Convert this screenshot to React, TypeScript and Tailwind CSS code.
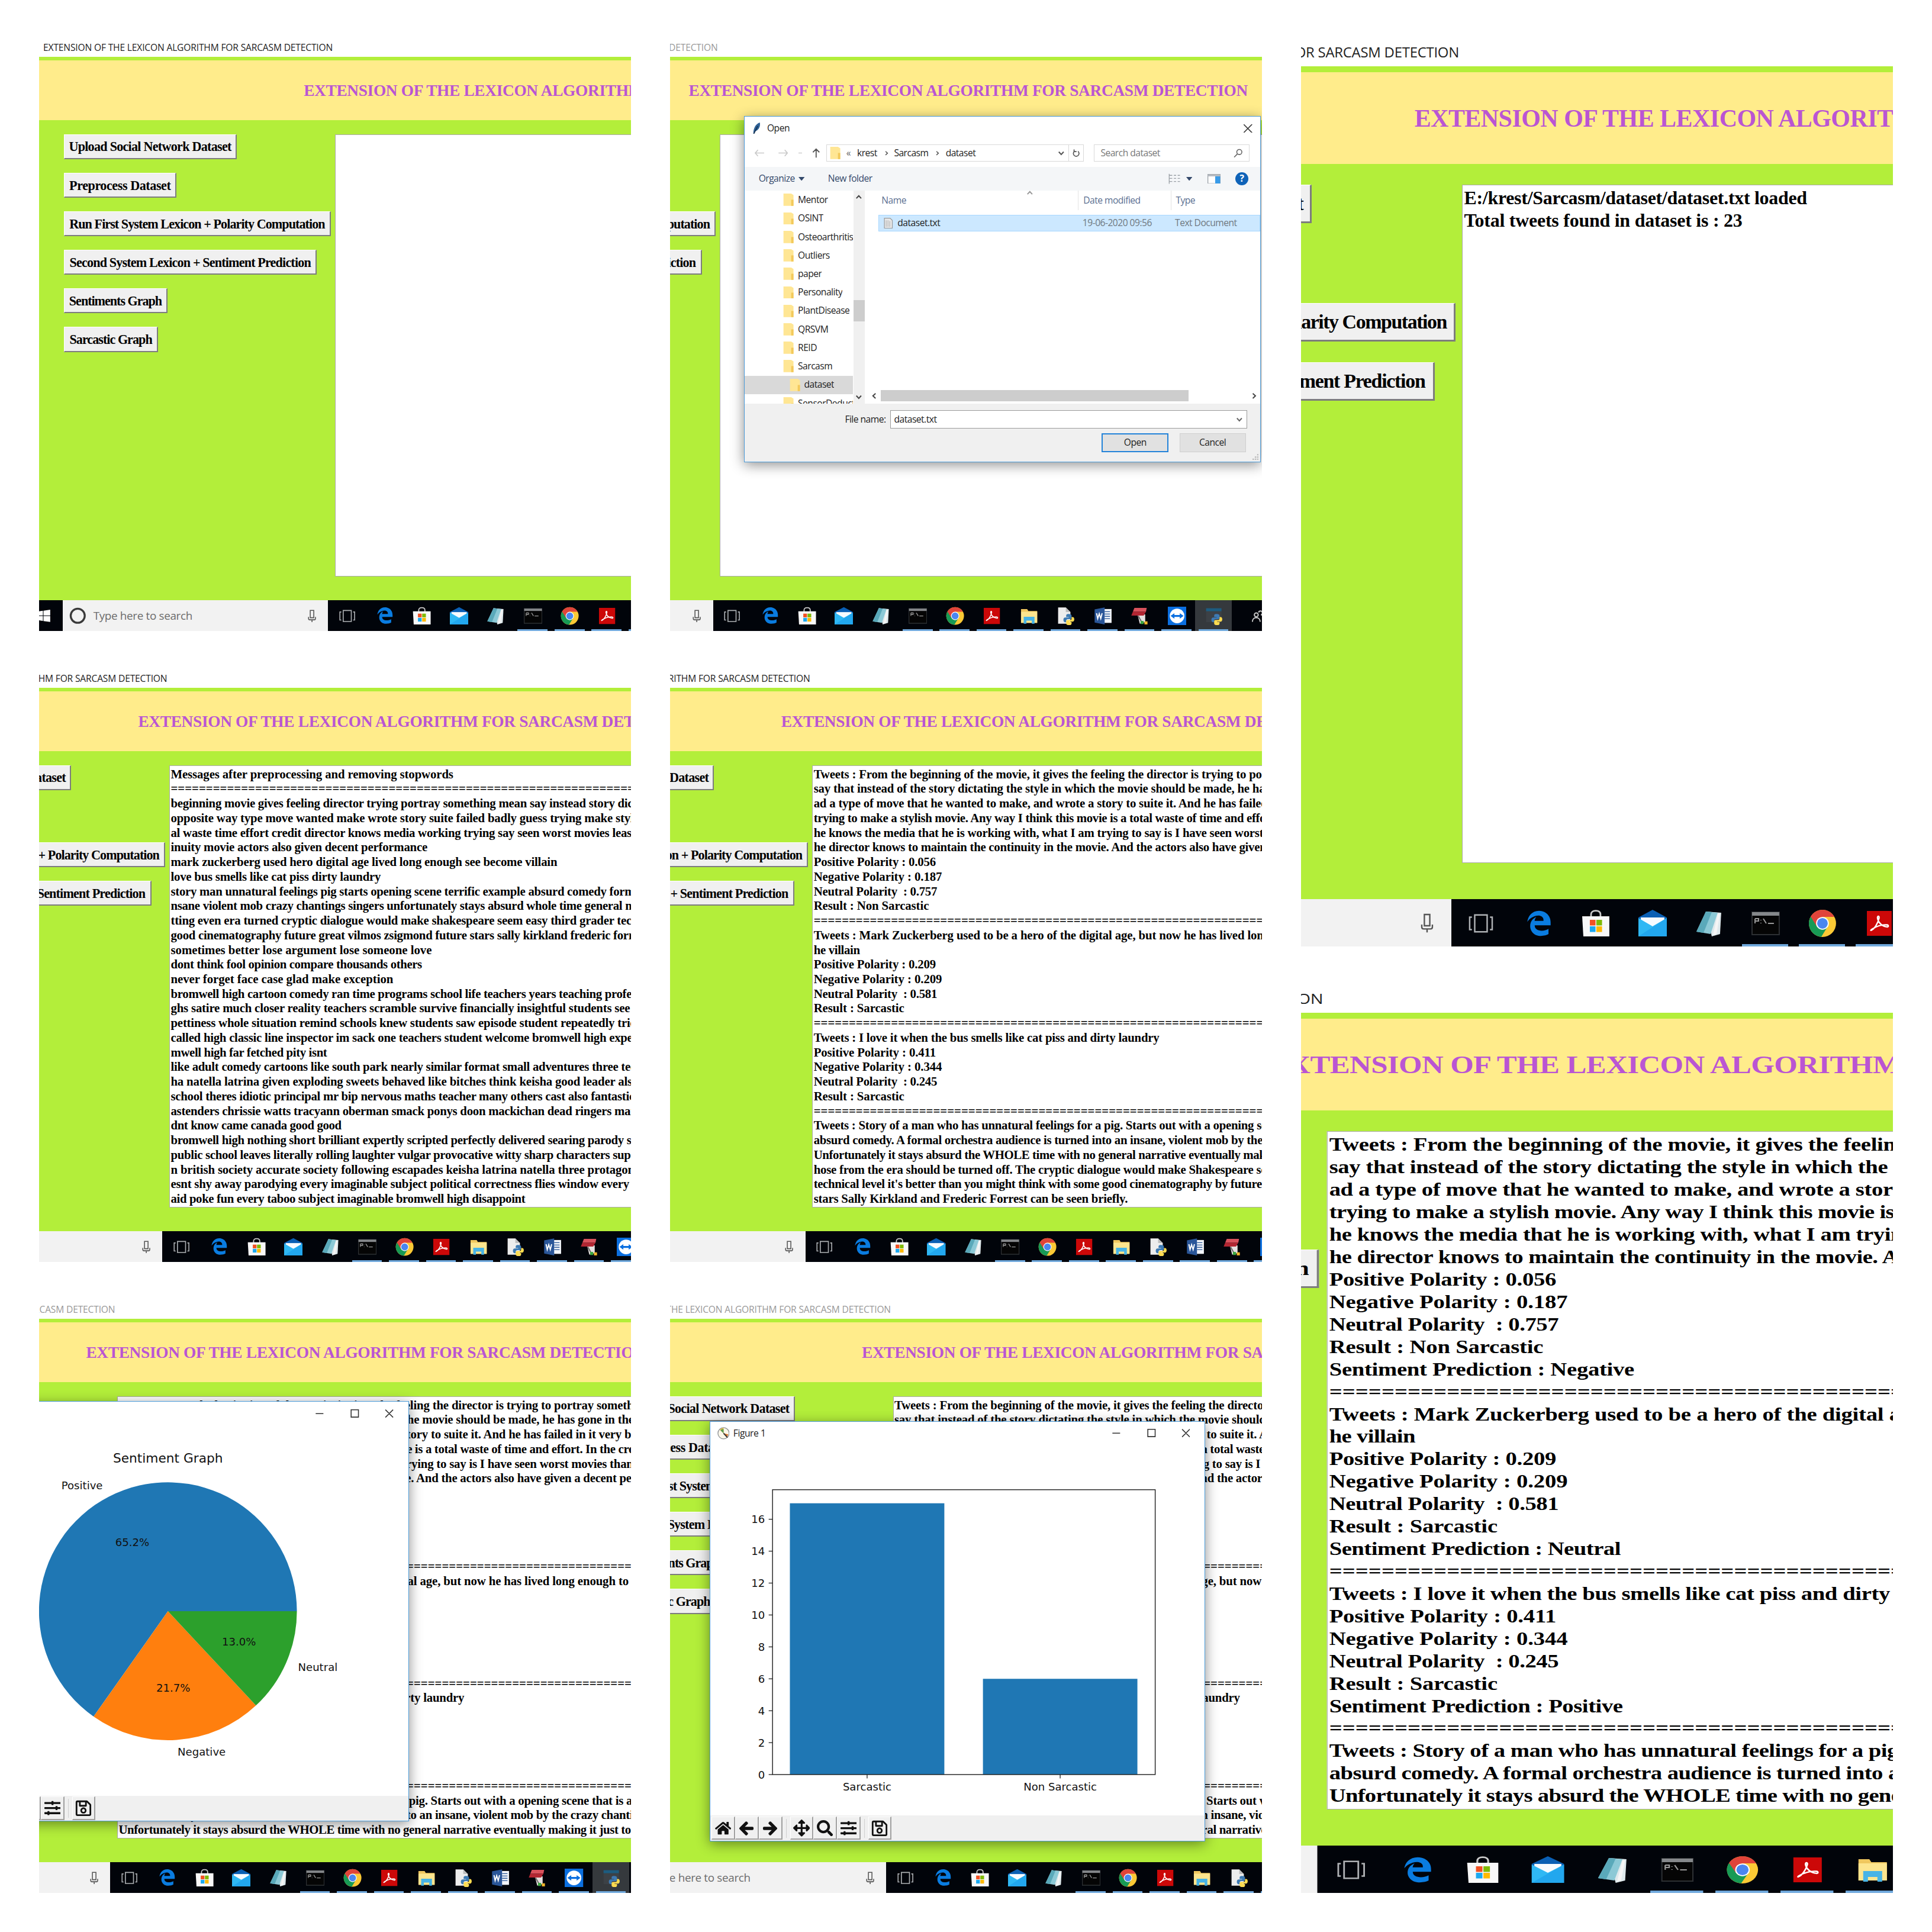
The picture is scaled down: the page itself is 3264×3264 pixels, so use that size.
import type { ReactNode } from "react";
import {
  FaArrowLeft,
  FaArrowRight,
  FaArrowsAlt,
  FaHome,
  FaRegSave,
  FaSearch,
  FaSlidersH,
} from "react-icons/fa";
import { FaEdgeLegacy } from "react-icons/fa6";

const TITLE = "EXTENSION OF THE LEXICON ALGORITHM FOR SARCASM DETECTION";

const ACTIONS: { label: string; width: string; text: number }[] = [
  { label: "Upload Social Network Dataset", width: "w-[224px]", text: 210.7 },
  { label: "Preprocess Dataset", width: "w-[146px]", text: 131.6 },
  { label: "Run First System Lexicon + Polarity Computation", width: "w-[346px]", text: 331.5 },
  { label: "Second System Lexicon + Sentiment Prediction", width: "w-[328px]", text: 313 },
  { label: "Sentiments Graph", width: "w-[134px]", text: 120 },
  { label: "Sarcastic Graph", width: "w-[122px]", text: 107 },
];

/* A line of output: its head, the width the head takes, and what follows it. */
type Line = [string, number, string?];

const RULE: Line = ["=".repeat(110), 1003];

const LOADED: Line[] = [
  ["E:/krest/Sarcasm/dataset/dataset.txt loaded", 290.4],
  ["Total tweets found in dataset is : 23", 235.6],
];

const PREPROCESSED: Line[] = [
  ["Messages after preprocessing and removing stopwords", 367],
  RULE,
  ["beginning movie gives feeling director trying portray something mean say instead story", 576.5, " dictating"],
  ["opposite way type move wanted make wrote story suite failed badly guess trying make", 573.5, " stylish"],
  ["al waste time effort credit director knows media working trying say seen worst movies", 569.5, " least"],
  ["inuity movie actors also given decent performance", 333],
  ["mark zuckerberg used hero digital age lived long enough see become villain", 501.5],
  ["love bus smells like cat piss dirty laundry", 272.5],
  ["story man unnatural feelings pig starts opening scene terrific example absurd comedy", 565.5, " formal"],
  ["nsane violent mob crazy chantings singers unfortunately stays absurd whole time general", 586, " narrative"],
  ["tting even era turned cryptic dialogue would make shakespeare seem easy third grader", 575.5, " technical"],
  ["good cinematography future great vilmos zsigmond future stars sally kirkland frederic", 570.5, " forrest"],
  ["sometimes better lose argument lose someone love", 339],
  ["dont think fool opinion compare thousands others", 326],
  ["never forget face case glad make exception", 289],
  ["bromwell high cartoon comedy ran time programs school life teachers years teaching", 559.5, " profession"],
  ["ghs satire much closer reality teachers scramble survive financially insightful students", 572.5, " see"],
  ["pettiness whole situation remind schools knew students saw episode student repeatedly", 576, " tried"],
  ["called high classic line inspector im sack one teachers student welcome bromwell high", 565.5, " expect"],
  ["mwell high far fetched pity isnt", 203],
  ["like adult comedy cartoons like south park nearly similar format small adventures three", 581, " teenage"],
  ["ha natella latrina given exploding sweets behaved like bitches think keisha good leader", 577, " also"],
  ["school theres idiotic principal mr bip nervous maths teacher many others cast also", 542, " fantastic"],
  ["astenders chrissie watts tracyann oberman smack ponys doon mackichan dead ringers", 572, " mark"],
  ["dnt know came canada good good", 221.5],
  ["bromwell high nothing short brilliant expertly scripted perfectly delivered searing parody", 588, " students"],
  ["public school leaves literally rolling laughter vulgar provocative witty sharp characters", 570.5, " superb"],
  ["n british society accurate society following escapades keisha latrina natella three", 537, " protagonists"],
  ["esnt shy away parodying every imaginable subject political correctness flies window every", 595],
  ["aid poke fun every taboo subject imaginable bromwell high disappoint", 460],
];

const MOVIE: Line[] = [
  ["Tweets : From the beginning of the movie, it gives the feeling the director is trying to", 561.5, " portray something mean"],
  ["say that instead of the story dictating the style in which the movie should be made,", 546, " he has gone in the opposite"],
  ["ad a type of move that he wanted to make, and wrote a story to suite it. And he has", 549, " failed in it very badly"],
  ["trying to make a stylish movie. Any way I think this movie is a total waste of time and", 559, " effort. In the credit"],
  ["he knows the media that he is working with, what I am trying to say is I have seen", 542.5, " worst movies than this"],
  ["he director knows to maintain the continuity in the movie. And the actors also have", 549.5, " given a decent performance"],
];
const MARK: Line[] = [
  ["Tweets : Mark Zuckerberg used to be a hero of the digital age, but now he has lived", 559, " long enough to see"],
  ["he villain", 60],
];
const BUS: Line = ["Tweets : I love it when the bus smells like cat piss and dirty laundry", 448.5];
const STORY: Line[] = [
  ["Tweets : Story of a man who has unnatural feelings for a pig. Starts out with a opening", 571.5, " scene that is a terrific"],
  ["absurd comedy. A formal orchestra audience is turned into an insane, violent mob by", 560, " the crazy chantings of"],
  ["Unfortunately it stays absurd the WHOLE time with no general narrative eventually", 554, " making it just too off"],
  ["hose from the era should be turned off. The cryptic dialogue would make Shakespeare", 571, " seem easy"],
  ["technical level it's better than you might think with some good cinematography by", 537.5, " future great Vilmos"],
  ["stars Sally Kirkland and Frederic Forrest can be seen briefly.", 407.5],
];

function scores(pos: string, neg: string, neu: string, result: Line): Line[] {
  return [
    [`Positive Polarity : ${pos}`, 158.5],
    [`Negative Polarity : ${neg}`, 166.5],
    [`Neutral Polarity  : ${neu}`, 160.2],
    result,
  ];
}

const SARCASTIC: Line = ["Result : Sarcastic", 117.5];
const NON_SARCASTIC: Line = ["Result : Non Sarcastic", 149.5];

const POLARITY: Line[] = [
  ...MOVIE,
  ...scores("0.056", "0.187", "0.757", NON_SARCASTIC),
  RULE,
  ...MARK,
  ...scores("0.209", "0.209", "0.581", SARCASTIC),
  RULE,
  BUS,
  ...scores("0.411", "0.344", "0.245", SARCASTIC),
  RULE,
  ...STORY,
];

const PREDICTION: Line[] = [
  ...MOVIE,
  ...scores("0.056", "0.187", "0.757", NON_SARCASTIC),
  ["Sentiment Prediction : Negative", 213],
  RULE,
  ...MARK,
  ...scores("0.209", "0.209", "0.581", SARCASTIC),
  ["Sentiment Prediction : Neutral", 203.5],
  RULE,
  BUS,
  ...scores("0.411", "0.344", "0.245", SARCASTIC),
  ["Sentiment Prediction : Positive", 205],
  RULE,
  ...STORY.slice(0, 3),
];

const ruler = document.createElement("canvas").getContext("2d");

/* Letter spacing that brings a text set in the given font to the given width. */
function spacing(text: string, font: string, width: number) {
  if (!ruler) return 0;
  ruler.font = font;
  return (width - ruler.measureText(text).width) / text.length;
}

function Fit({ text, font, width, tail = "" }: { text: string; font: string; width: number; tail?: string }) {
  return (
    <span className="whitespace-pre" style={{ letterSpacing: `${spacing(text, font, width)}px` }}>
      {text + tail}
    </span>
  );
}

/* ---------- taskbar ---------- */

function PythonMark() {
  return (
    <>
      <path
        d="M15.5 9.5c-2.400 0-3 1-3 2.200v1.800h3.200v.6h-4.500c-1.500 0-2.300 1.200-2.300 3s.8 3 2 3h1.600v-1.900c0-1.200 1-2 2.100-2h3.200c1 0 1.700-.8 1.700-1.700v-2.800c0-1.400-1.300-2.200-4-2.200z"
        fill="#3d7ab3"
      />
      <path
        d="M16.500 24c2.400 0 3-1 3-2.200V20h-3.200v-.6h4.500c1.500 0 2.200-1.200 2.200-3s-.8-3-2-3h-1.500v1.900c0 1.200-1 2-2.100 2h-3.200c-1 0-1.700.8-1.700 1.700v2.800c0 1.400 1.300 2.200 4 2.200z"
        fill="#ffdc50"
      />
    </>
  );
}

function Glyph({ children }: { children: ReactNode }) {
  return (
    <svg viewBox="0 0 24 24" className="h-6 w-6">
      {children}
    </svg>
  );
}

const APPS: { name: string; running: boolean; icon: ReactNode }[] = [
  { name: "edge", running: false, icon: <FaEdgeLegacy className="h-[23px] w-[22px] text-[#0a7ce0]" /> },
  {
    name: "store",
    running: false,
    icon: (
      <Glyph>
        <path d="M8 7V4.500C8 2.500 9.500 1.300 12 1.300s4 1.200 4 3.200V7" fill="none" stroke="#c9c9c9" strokeWidth="1.400" />
        <path d="M.5 6h23v17h-22z" fill="#f8f8f8" />
        <path d="M7 9h4.800v4.800H7z" fill="#f25022" />
        <path d="M12.500 9h4.800v4.800h-4.800z" fill="#7fba00" />
        <path d="M7 14.500h4.800v4.800H7z" fill="#1ba8f0" />
        <path d="M12.500 14.500h4.800v4.800h-4.800z" fill="#ffb900" />
      </Glyph>
    ),
  },
  {
    name: "mail",
    running: false,
    icon: (
      <Glyph>
        <path d="M0 7 12 .5 24 7v16H0z" fill="#0a5fb4" />
        <path d="M2 7h20v9H2z" fill="#f7fbff" />
        <path d="M0 7.500l12 7L24 7.500V23H0z" fill="#2fb8f4" />
        <path d="M0 23 24 7.500V23z" fill="#22a7ee" />
      </Glyph>
    ),
  },
  {
    name: "notepad",
    running: false,
    icon: (
      <Glyph>
        <path d="M9 2l13 1-1 18-7 2z" fill="#dfe9ec" />
        <path d="M9 2l10 1-6 18-12-2z" fill="#8cc9d6" />
        <path d="M9 2l5 .5L7 20l-6-1z" fill="#5aa9ba" />
        <path d="M19 4h2l-3 17-3 1z" fill="#f5f5f5" />
      </Glyph>
    ),
  },
  {
    name: "terminal",
    running: true,
    icon: (
      <Glyph>
        <path d="M.5 2.500h23v19H.5z" fill="#050505" stroke="#2d3033" />
        <path d="M.5 2.500h23v3H.5z" fill="#85888b" />
        <path d="M3 8v4M3 8h3v2H3M8 9v.5M8 11.500v.5M10 8l2.500 4M14 12h5" stroke="#9a9a9a" fill="none" />
      </Glyph>
    ),
  },
  {
    name: "chrome",
    running: true,
    icon: (
      <Glyph>
        <circle cx="12" cy="12" r="11.500" fill="#fbc935" />
        <path d="M2.040 6.250A11.500 11.500 0 0 0 11 23.450L16.500 14.500 12 12z" fill="#179a55" />
        <path d="M12 6.500h10.100A11.500 11.500 0 0 0 2.040 6.250L7.200 14.600 9 9z" fill="#e0443a" />
        <circle cx="12" cy="12" r="5.400" fill="#fff" />
        <circle cx="12" cy="12" r="4.500" fill="#4a86f0" />
      </Glyph>
    ),
  },
  {
    name: "reader",
    running: true,
    icon: (
      <Glyph>
        <path d="M1.500 1.500h21v21h-21z" fill="#cc0808" />
        <path
          d="M5 18c3-1 6-6.500 6.800-10.500.4-2-1.600-2-1.300 0 .6 4 4 7 8 7.500 1.500.1 1.500-1.500 0-1.700-3.500-.4-8 .8-12 3.200-1.500 1-1.900 1.500-1.500 1.500z"
          fill="none"
          stroke="#fff"
          strokeWidth="1.200"
        />
      </Glyph>
    ),
  },
  {
    name: "explorer",
    running: true,
    icon: (
      <Glyph>
        <path d="M1.500 3h8l1.500 2.500h11.500V21h-21z" fill="#f0c75e" />
        <path d="M1.500 6.500h21V21h-21z" fill="#fde58e" />
        <path d="M5 13h14v9h-3.500v-4h-7v4H5z" fill="#48b4e6" />
      </Glyph>
    ),
  },
  {
    name: "python file",
    running: true,
    icon: (
      <Glyph>
        <path d="M2 1h10l6 6v15H2z" fill="#ededed" />
        <path d="M12 1l6 6h-6z" fill="#bdbdbd" />
        <PythonMark />
      </Glyph>
    ),
  },
  {
    name: "word",
    running: true,
    icon: (
      <Glyph>
        <path d="M12 3h11v18H12z" fill="#f2f5fa" />
        <path d="M14 6.500h7M14 9.500h7M14 12.500h7M14 15.500h7" stroke="#2b5797" />
        <path d="M1 3.500 14 1v22L1 20.500z" fill="#2a5699" />
        <path d="M3.500 8.500 5 15.500l2-6.500 2 6.500 1.700-7" fill="none" stroke="#fff" strokeWidth="1.500" />
      </Glyph>
    ),
  },
  {
    name: "archive",
    running: true,
    icon: (
      <Glyph>
        <path d="M9 10h10v10l-7 2z" fill="#e6e1e0" />
        <path d="M5 1.500h16l-1 5H3z" fill="#d9525c" />
        <path d="M3 6.500h17l-3 5H1z" fill="#b32632" />
        <path d="M10 12l5 9" stroke="#666" strokeWidth="1.500" />
        <path d="M13 18.500h4v4h-4z" fill="#3aa63f" />
        <path d="M18 19h4v4h-4z" fill="#f0b52a" />
      </Glyph>
    ),
  },
  {
    name: "remote",
    running: true,
    icon: (
      <Glyph>
        <path d="M0 0h24v24H0z" fill="#0b6fe0" />
        <circle cx="12" cy="12" r="9.500" fill="#fff" />
        <path d="M3.500 12 8.500 8.500v2.300h7V8.500l5 3.500-5 3.500v-2.300h-7v2.300z" fill="#0b6fe0" />
      </Glyph>
    ),
  },
  {
    name: "python",
    running: true,
    icon: (
      <Glyph>
        <path d="M2 2h20v4H2z" fill="#1d5c80" />
        <path d="M2 6h20v14H2z" fill="#3c4146" />
        <PythonMark />
      </Glyph>
    ),
  },
];

function Taskbar({ focused, stretch }: { focused: boolean; stretch: string }) {
  return (
    <div className={"flex h-10 bg-[#01040a] " + stretch}>
      <div className="flex w-12 items-center justify-center pt-px">
        <svg viewBox="0 0 16 16" className="h-4 w-4" fill="#fff">
          <path d="M0 2.300 6.500 1.400v6.100H0zM7.300 1.300 16 0v7.500H7.300zM0 8.300h6.500v6.200L0 13.600zM7.300 8.300H16V16l-8.700-1.300z" />
        </svg>
      </div>
      <div className="flex w-[344.500px] items-center bg-[#f2f2f2] pt-px pr-[14px] pl-[9px]">
        <svg viewBox="0 0 20 20" className="h-[22px] w-[22px]">
          <circle cx="10" cy="10" r="8.300" fill="none" stroke="#3a3a3a" strokeWidth="2.300" />
        </svg>
        <span className="ml-[9px] flex-1 text-[14.500px] text-[#6c6c6c]">
          <Fit text="Type here to search" font="14.5px 'Open Sans'" width={128.5} />
        </span>
        <svg viewBox="0 0 14 20" className="h-5 w-[14px]" fill="none" stroke="#555" strokeWidth="1.200">
          <path d="M4.700 2.500h4.600v9.500H4.700z" />
          <path d="M2.500 11v2c0 1 .6 1.700 1.600 1.700h5.800c1 0 1.600-.7 1.600-1.700v-2M7 14.700v3" />
        </svg>
      </div>
      <div className="flex w-[49.500px] items-center justify-center pt-px">
        <svg viewBox="0 0 22 18" className="h-[18px] w-[21px]" fill="none" stroke="#aeb1b4" strokeWidth="1.300">
          <path d="M5.500 1.500h11v15h-11zM3 3.500H1v11h2M19 3.500h2v11h-2" />
        </svg>
      </div>
      {APPS.map((app) => (
        <div
          key={app.name}
          className={
            "flex w-12 flex-col items-center " + (focused && app.name === "python" ? "bg-[#35393d]" : "")
          }
        >
          <div className="flex flex-1 items-center pt-[2.500px] pl-px">{app.icon}</div>
          <div className={"h-[2px] " + (app.running ? "w-[39px] bg-[#6fa8dc]" : "w-full")} />
        </div>
      ))}
      <div className="flex w-12 items-center pl-6">
        <svg viewBox="0 0 20 20" className="h-5 w-5" fill="none" stroke="#c9c9c9" strokeWidth="1.500">
          <circle cx="8" cy="9" r="2.500" />
          <path d="M3 18c0-7 10-7 10 0M11 6a2.500 2.500 0 1 1 3 3c2.500 0 4 2 4 5" />
        </svg>
      </div>
    </div>
  );
}

/* ---------- application window ---------- */

function Desktop({
  lines,
  inactive = false,
  focused = false,
  barStretch = "",
  children,
}: {
  lines: Line[];
  inactive?: boolean;
  focused?: boolean;
  barStretch?: string;
  children?: ReactNode;
}) {
  return (
    <div className="relative flex h-[768px] w-[1366px] flex-col bg-[#b3ee3a] font-['Open_Sans',sans-serif]">
      <div
        className={
          "flex h-[23px] items-center bg-white pb-px pl-[23px] text-[12px] " +
          (inactive ? "text-[#999999]" : "text-[#222222]")
        }
      >
        <Fit text={TITLE} font="12px 'Open Sans'" width={376} />
      </div>
      <div className="mt-[5px] flex h-[77.500px] items-center bg-[#ffec8b] pt-px pl-[361px] font-['Liberation_Serif',serif] text-[21px] font-bold text-[#ba55d3]">
        <Fit text={TITLE} font="bold 21px 'Liberation Serif'" width={728} />
      </div>
      <div className="flex flex-1 items-start overflow-hidden pt-[18px] pl-[50px]">
        <div className="flex w-[351.500px] shrink-0 flex-col items-start gap-[17.500px]">
          {ACTIONS.map((a) => (
            <div
              key={a.label}
              className={
                a.width +
                " flex h-[32.500px] items-center justify-center border-t border-r-2 border-b-2 border-l border-t-white border-r-[#7d7d7d] border-b-[#7d7d7d] border-l-white bg-[#f0f0f0] pt-px font-['Liberation_Serif',serif] text-[17px] font-bold text-black"
              }
            >
              <Fit text={a.label} font="bold 17px 'Liberation Serif'" width={a.text} />
            </div>
          ))}
        </div>
        <div className="h-[574px] w-[900px] shrink-0 overflow-hidden border border-[#a9a9a9] bg-white pt-[1.500px] pl-px font-['Liberation_Serif',serif] text-[16px] leading-[19px] font-bold text-black">
          {lines.map(([head, width, tail], i) => (
            <div key={i} className="h-[19px] whitespace-pre">
              <Fit text={head} font="bold 16px 'Liberation Serif'" width={width} tail={tail} />
            </div>
          ))}
        </div>
      </div>
      <Taskbar focused={focused} stretch={barStretch} />
      {children}
    </div>
  );
}

/* ---------- file dialog ---------- */

function Folder() {
  return (
    <svg viewBox="0 0 14 16" className="h-4 w-[14px] shrink-0">
      <path d="M.5 0h10l3 2v14H.5z" fill="#ffe694" />
      <path d="M10.500 8h3v8h-3z" fill="#f3c95b" />
    </svg>
  );
}

function Chevron({ className, turn }: { className: string; turn?: string }) {
  return (
    <svg
      viewBox="0 0 10 10"
      className={"h-[9px] w-[9px] shrink-0 " + (turn ?? "") + " " + className}
      fill="none"
      stroke="currentColor"
      strokeWidth="1.700"
    >
      <path d="M1.500 3 5 6.800 8.500 3" />
    </svg>
  );
}

const FOLDERS = [
  "Mentor",
  "OSINT",
  "Osteoarthritis",
  "Outliers",
  "paper",
  "Personality",
  "PlantDisease",
  "QRSVM",
  "REID",
  "Sarcasm",
  "dataset",
  "SensorDeduct",
];

function OpenDialog() {
  return (
    <div className="absolute top-[100px] left-[433px] flex h-[449px] w-[670px] flex-col border border-[#4a9ad8] bg-white text-[12px] tracking-[-0.400px] whitespace-nowrap text-[#222] shadow-[0_4px_16px_rgba(0,0,0,0.45)]">
      <div className="flex h-[29px] items-center pt-px pr-[10px] pl-[10px]">
        <svg viewBox="0 0 12 16" className="h-[15px] w-3">
          <path d="M1 16C1 8 4 2 10 0c1 5-1 10-6 12L2 16z" fill="#2d5f94" />
          <path d="M1.500 16 7 5" stroke="#12263d" />
        </svg>
        <span className="ml-[7px] flex-1">Open</span>
        <svg viewBox="0 0 10 10" className="h-[11px] w-[11px]" stroke="#333" strokeWidth="1.100">
          <path d="M0 0l10 10M10 0 0 10" />
        </svg>
      </div>
      <div className="flex h-9 items-center pr-[12px] pl-[12px]">
        <svg viewBox="0 0 14 10" className="h-[10px] w-[14px]" fill="none" stroke="#c9c9c9" strokeWidth="1.300">
          <path d="M13 5H1.500M5 1 1.500 5 5 9" />
        </svg>
        <svg viewBox="0 0 14 10" className="ml-[17px] h-[10px] w-[14px]" fill="none" stroke="#c9c9c9" strokeWidth="1.300">
          <path d="M1 5h11.500M9 1l3.500 4L9 9" />
        </svg>
        <span className="ml-[13px] h-px w-1 bg-[#bbb]" />
        <svg viewBox="0 0 12 14" className="ml-[13px] h-[13px] w-3" fill="none" stroke="#555" strokeWidth="1.500">
          <path d="M6 13.500V1.500M1.500 6 6 1.500 10.500 6" />
        </svg>
        <div className="ml-[7px] flex h-[22px] w-[334px] items-center border border-[#d9d9d9] pl-1">
          <Folder />
          <span className="ml-[7px] w-[14px] text-[#666]">«</span>
          <span className="w-[34px]">krest</span>
          <Chevron className="text-[#555]" turn="-rotate-90 scale-75" />
          <span className="ml-[5px] w-[52px]">Sarcasm</span>
          <Chevron className="text-[#555]" turn="-rotate-90 scale-75" />
          <span className="ml-[6px] flex-1">dataset</span>
          <Chevron className="mr-[5px] text-[#555]" />
          <div className="flex h-full w-[19px] items-center justify-center border-l border-[#d9d9d9]">
            <svg viewBox="0 0 12 12" className="h-3 w-[11px]" fill="none" stroke="#555" strokeWidth="1.400">
              <path d="M8.500 3.300a4 4 0 1 1-5 0M3 .8v3h3.500" />
            </svg>
          </div>
        </div>
        <div className="ml-[13px] flex h-[22px] w-[202px] items-center justify-between border border-[#d9d9d9] pr-2 pl-2 text-[#777]">
          <span>Search dataset</span>
          <svg viewBox="0 0 12 12" className="h-3 w-3" fill="none" stroke="#666" strokeWidth="1.200">
            <circle cx="7.500" cy="4.500" r="3.300" />
            <path d="M5 7 .8 11.200" />
          </svg>
        </div>
      </div>
      <div className="flex h-[31px] items-center bg-[#f4f6f8] pl-[18px] text-[#34496b]">
        <span className="w-[52px]">Organize</span>
        <svg viewBox="0 0 8 5" className="h-[5px] w-2" fill="#34496b">
          <path d="M0 0h8L4 5z" />
        </svg>
        <span className="ml-[30px] flex-1">New folder</span>
        <svg viewBox="0 0 16 14" className="h-[14px] w-4" stroke="#9aa0a6" fill="none">
          <path d="M1 .5v13M1 2.500h4M1 6.500h4M1 10.500h4M7 2.500h3M7 6.500h3M7 10.500h3M12 2.500h3M12 6.500h3M12 10.500h3" />
        </svg>
        <svg viewBox="0 0 8 5" className="mr-px ml-[7px] h-[5px] w-2" fill="#34496b">
          <path d="M0 0h8L4 5z" />
        </svg>
        <svg viewBox="0 0 17 13" className="ml-[19px] h-[13px] w-[17px]">
          <path d="M.5.500h16v12H.5z" fill="#fff" stroke="#9aa0a6" />
          <path d="M.5.500h16V3H.5z" fill="#b5bac0" />
          <path d="M10 3h6.500v9.500H10z" fill="#3a9be8" />
        </svg>
        <div className="mr-[15px] ml-[19px] flex h-[17px] w-[17px] items-center justify-center rounded-full bg-[#0f63b8] text-[12px] font-bold text-white">
          ?
        </div>
      </div>
      <div className="flex h-[276px] overflow-hidden">
        <div className="w-[140px] overflow-hidden">
          {FOLDERS.map((name) => (
            <div
              key={name}
              className={
                "flex h-6 items-center gap-[5px] " + (name === "dataset" ? "bg-[#d9d9d9] pl-[58px]" : "pl-[50px]")
              }
            >
              <Folder />
              <span className="overflow-hidden">{name}</span>
            </div>
          ))}
        </div>
        <div className="ml-px flex w-[14.500px] flex-col items-center bg-[#f0f0f0] pt-1">
          <Chevron className="text-[#444]" turn="rotate-180" />
          <div className="mt-[129px] h-7 w-full bg-[#cdcdcd]" />
          <Chevron className="mt-auto mb-[4px] text-[#444]" />
        </div>
        <div className="flex flex-1 flex-col">
          <div className="flex justify-center pr-[84px]">
            <Chevron className="-mt-[2px] -mb-[7px] text-[#999]" turn="rotate-180" />
          </div>
          <div className="flex h-[25px] items-center text-[#5b6f91]">
            <span className="w-[277px] pl-[22px]">Name</span>
            <span className="h-full w-[120px] border-l border-[#e3e3e3] pt-1 pl-[6px]">Date modified</span>
            <span className="h-full border-l border-[#e3e3e3] pt-1 pl-[6px]">Type</span>
          </div>
          <div className="mt-[6px] ml-[18px] flex h-[22px] items-center border border-[#a8d8ff] bg-[#cce8ff] pl-[6px]">
            <svg viewBox="0 0 12 15" className="h-[14px] w-[12px]">
              <path d="M.5.500h8l3 3v11H.5z" fill="#e8e8e8" stroke="#9a9a9a" />
              <path d="M3 3.500v9M5.500 3.500v9M8 4.500v8" stroke="#b5b5b5" />
            </svg>
            <span className="ml-[6px] w-[240px]">dataset.txt</span>
            <span className="w-[120px] text-[#707880]">19-06-2020 09:56</span>
            <span className="text-[#707880]">Text Document</span>
          </div>
          <div className="mt-auto flex h-[17px] items-start pl-[8px]">
            <Chevron className="mt-[3px] text-[#444]" turn="rotate-90" />
            <div className="ml-[4px] h-[14.500px] w-[399px] bg-[#cdcdcd]" />
            <Chevron className="mt-[3px] mr-[3px] ml-auto text-[#444]" turn="-rotate-90" />
          </div>
        </div>
      </div>
      <div className="flex flex-1 flex-col bg-[#f0f0f0] pt-[9px]">
        <div className="flex items-center">
          <span className="w-[183px] text-right">File name:</span>
          <div className="ml-[6px] flex h-6 w-[463px] items-center justify-between border border-[#9a9a9a] bg-white pr-[5px] pl-[4px]">
            <span>dataset.txt</span>
            <Chevron className="text-[#666]" />
          </div>
        </div>
        <div className="mt-[6px] flex gap-[14px] pl-[463px]">
          <div className="flex h-6 w-[87px] items-center justify-center border-2 border-[#2383d9] bg-[#e1e1e1]">Open</div>
          <div className="flex h-6 w-[86px] items-center justify-center border border-[#cfcfcf] bg-[#e1e1e1]">Cancel</div>
        </div>
        <svg viewBox="0 0 8 8" className="mt-auto mr-0.5 mb-0.5 h-2 w-2 self-end" fill="#bdbdbd">
          <path d="M6 0h2v2H6zM6 3h2v2H6zM6 6h2v2H6zM3 3h2v2H3zM3 6h2v2H3zM0 6h2v2H0z" />
        </svg>
      </div>
    </div>
  );
}

/* ---------- figure windows ---------- */

const TOOLS: { name: string; icon: ReactNode; gap: boolean }[] = [
  { name: "home", icon: <FaHome className="h-[21px] w-[21px]" />, gap: false },
  { name: "back", icon: <FaArrowLeft className="h-[20px] w-[20px] stroke-current stroke-[26px]" />, gap: false },
  { name: "forward", icon: <FaArrowRight className="h-[20px] w-[20px] stroke-current stroke-[26px]" />, gap: false },
  { name: "pan", icon: <FaArrowsAlt className="h-[22px] w-[22px]" />, gap: true },
  { name: "zoom", icon: <FaSearch className="h-[21px] w-[21px]" />, gap: false },
  { name: "subplots", icon: <FaSlidersH className="h-[21px] w-[21px]" />, gap: false },
  { name: "save", icon: <FaRegSave className="h-[23px] w-[23px]" />, gap: true },
];

function FigureWindow({ place, children }: { place: string; children: ReactNode }) {
  return (
    <div
      className={
        place +
        " absolute flex h-[545px] w-[643px] flex-col border border-[#4a9ad8] bg-white text-[12px] text-[#222] shadow-[0_4px_16px_rgba(0,0,0,0.45)]"
      }
    >
      <div className="flex h-[30px] items-center pr-[18px] pl-[9px]">
        <svg viewBox="0 0 16 16" className="h-4 w-4">
          <circle cx="8" cy="8" r="7.300" fill="#fbf7ea" stroke="#8b8f94" />
          <path d="M8 8 3 3.500A7 7 0 0 1 8 1z" fill="#e6c04a" />
          <path d="M8 8V2.500A5.500 5.500 0 0 0 4 4.300z" fill="#5a9c52" />
          <path d="M8 8l4.500 4.500A6.400 6.400 0 0 0 14 9.500z" fill="#d9742c" />
          <path d="M8 8l5 5.500" stroke="#333" strokeWidth="1.500" />
        </svg>
        <span className="ml-[5px] flex-1">
          <Fit text="Figure 1" font="12px 'Open Sans'" width={42} />
        </span>
        <svg viewBox="0 0 102 11" className="mr-px h-[11px] w-[102px]" fill="none" stroke="#333" strokeWidth="1.200">
          <path d="M1 5.500h10M47 .6h9.500v9.500H47zM91.500.500l10 10M101.500.500l-10 10" />
        </svg>
      </div>
      <div className="h-[481px] pl-px">{children}</div>
      <div className="flex flex-1 items-stretch bg-[#f0f0f0] py-[1px] pl-[2px]">
        {TOOLS.map((tool) => (
          <div key={tool.name} className={"flex " + (tool.gap ? "pl-[10px]" : "")}>
            {tool.gap && <div className="my-[3px] -ml-[5px] mr-[4px] w-px bg-[#cfcfcf]" />}
            <div className="flex w-[30.500px] items-center justify-center border-t border-r-2 border-b-2 border-l border-t-white border-r-[#a0a0a0] border-b-[#a0a0a0] border-l-white pt-px text-[#111]">
              {tool.icon}
            </div>
          </div>
        ))}
      </div>
    </div>
  );
}

const SLICES = [
  { label: "Positive", share: 15 / 23, text: "65.2%", color: "#1f77b4" },
  { label: "Negative", share: 5 / 23, text: "21.7%", color: "#ff7f0e" },
  { label: "Neutral", share: 3 / 23, text: "13.0%", color: "#2ca02c" },
];

function PieChart() {
  const cx = 328.5;
  const cy = 242;
  const r = 167.3;
  let start = 0;
  return (
    <svg viewBox="0 0 640 480" className="h-[480px] w-[640px] font-['DejaVu_Sans',sans-serif] text-[13.890px]" fill="#111">
      <text x={cx} y="49.500" textAnchor="middle" className="text-[16.670px]">
        Sentiment Graph
      </text>
      {SLICES.map((s) => {
        const a0 = start * 2 * Math.PI;
        const a1 = (start + s.share) * 2 * Math.PI;
        const mid = (a0 + a1) / 2;
        start += s.share;
        return (
          <g key={s.label}>
            <path
              d={`M${cx} ${cy}L${cx + r * Math.cos(a0)} ${cy - r * Math.sin(a0)}A${r} ${r} 0 ${s.share > 0.5 ? 1 : 0} 0 ${cx + r * Math.cos(a1)} ${cy - r * Math.sin(a1)}z`}
              fill={s.color}
            />
            <text
              x={cx + 1.1 * r * Math.cos(mid)}
              y={cy - 1.095 * r * Math.sin(mid) + 4.3}
              textAnchor={Math.cos(mid) > 0 ? "start" : "end"}
            >
              {s.label}
            </text>
            <text x={cx + 0.6 * r * Math.cos(mid)} y={cy - 0.6 * r * Math.sin(mid) + 4.5} textAnchor="middle">
              {s.text}
            </text>
          </g>
        );
      })}
    </svg>
  );
}

function BarChart() {
  const unit = 369.6 / 17.85;
  const base = 427.8;
  const bars = [
    { label: "Sarcastic", value: 17, x: 102.5 },
    { label: "Non Sarcastic", value: 6, x: 353 },
  ];
  return (
    <svg viewBox="0 0 640 480" className="h-[480px] w-[640px] font-['DejaVu_Sans',sans-serif] text-[13.890px]" fill="#111">
      {bars.map((b) => (
        <g key={b.label}>
          <rect x={b.x} y={base - b.value * unit} width="200.400" height={b.value * unit} fill="#1f77b4" />
          <path d={`M${b.x + 100.2} ${base}v5`} stroke="#222" />
          <text x={b.x + 100.2} y={base + 20.6} textAnchor="middle">
            {b.label}
          </text>
        </g>
      ))}
      {[0, 2, 4, 6, 8, 10, 12, 14, 16].map((v) => (
        <g key={v}>
          <path d={`M80 ${base - v * unit}h-5`} stroke="#222" />
          <text x="70" y={base - v * unit + 5.2} textAnchor="end">
            {v}
          </text>
        </g>
      ))}
      <rect x="80" y="58.200" width="496.500" height="369.600" fill="none" stroke="#222" strokeWidth="1.100" />
    </svg>
  );
}

/* ---------- gallery ---------- */

function Small({ shift, children }: { shift: string; children: ReactNode }) {
  return (
    <div className="h-[1000px] w-[1000px] overflow-hidden">
      <div className={"w-[1366px] [zoom:1.30208] " + shift}>{children}</div>
    </div>
  );
}

function Large({ shift, stretch = "", children }: { shift: string; stretch?: string; children: ReactNode }) {
  return (
    <div className="h-[1533px] w-[1000px] overflow-hidden">
      <div className={stretch}>
        <div className={"w-[1366px] [zoom:1.99609] " + shift}>{children}</div>
      </div>
    </div>
  );
}

export default function App() {
  return (
    <div className="flex h-[3264px] w-[3264px] gap-[66px] overflow-hidden bg-white p-[66px]">
      <div className="grid grid-cols-2 content-start gap-[66px]">
        <Small shift="-ml-[17.600px]">
          <Desktop lines={[]} />
        </Small>
        <Small shift="-ml-[336.800px]">
          <Desktop lines={[]} inactive focused>
            <OpenDialog />
          </Desktop>
        </Small>
        <Small shift="-ml-[232.400px]">
          <Desktop lines={PREPROCESSED} />
        </Small>
        <Small shift="-ml-[216.900px]">
          <Desktop lines={POLARITY} />
        </Small>
        <Small shift="-ml-[300px]">
          <Desktop lines={PREDICTION} inactive focused>
            <FigureWindow place="top-[130px] left-[137px]">
              <PieChart />
            </FigureWindow>
          </Desktop>
        </Small>
        <Small shift="-ml-[112.200px]">
          <Desktop lines={PREDICTION} inactive>
            <FigureWindow place="top-[156px] left-[163.500px]">
              <BarChart />
            </FigureWindow>
          </Desktop>
        </Small>
      </div>
      <div className="flex flex-col gap-[66px]">
        <Large shift="-ml-[265px]">
          <Desktop lines={LOADED} />
        </Large>
        <Large shift="-ml-[383.300px]" stretch="origin-top-left scale-x-[1.2124]">
          <Desktop lines={PREDICTION} barStretch="origin-[435px_50%] scale-x-[0.945]" />
        </Large>
      </div>
    </div>
  );
}
